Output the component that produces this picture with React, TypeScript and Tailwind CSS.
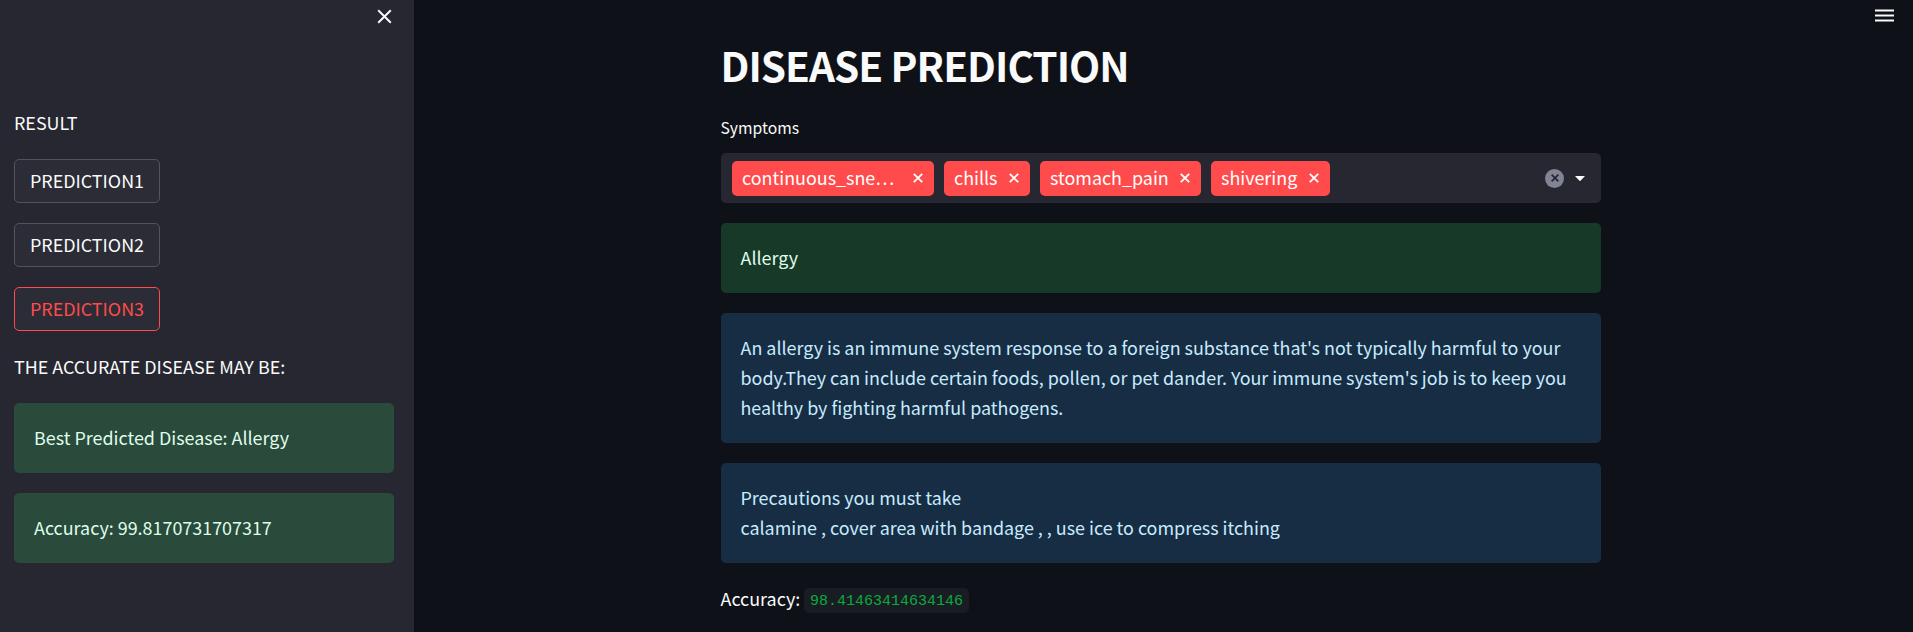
import type { ReactNode } from 'react';

function Cross({ className }: { className: string }) {
  return (
    <svg viewBox="0 0 10 10" className={className} fill="none" stroke="currentColor">
      <path d="M0.8 0.8 9.2 9.2M9.2 0.8 0.8 9.2" />
    </svg>
  );
}

function SidebarButton({ label, active = false }: { label: string; active?: boolean }) {
  return (
    <button
      className={
        active
          ? 'flex h-11 w-[146px] items-center justify-center rounded-[5px] border border-[#ff4b4b] bg-[#2b2c36] pb-0.5 text-[#ff4b4b]'
          : 'flex h-11 w-[146px] items-center justify-center rounded-[5px] border border-[#52535b] bg-[#2b2c36] pb-0.5'
      }
    >
      {label}
    </button>
  );
}

function Tag({ label, size }: { label: string; size: string }) {
  return (
    <span className={`flex h-[35px] items-center justify-between rounded-[5px] bg-[#ff4b4b] pr-[11px] pl-2.5 text-white ${size}`}>
      <span className="pb-0.5 leading-[26px]">{label}</span>
      <Cross className="size-2.5 stroke-[1.9]" />
    </span>
  );
}

function Alert({ tone, children }: { tone: string; children: ReactNode }) {
  return (
    <div className={`rounded-[5px] pt-[19px] pr-5 pb-[21px] leading-[30px] whitespace-nowrap ${tone}`}>
      {children}
    </div>
  );
}

export default function App() {
  return (
    <div className="flex h-[632px] w-full overflow-hidden bg-[#0e1117] font-['Noto_Sans_CJK_SC',sans-serif] text-[17.92px] text-[#fafafa]">
      <aside className="flex w-[414px] shrink-0 flex-col bg-[#262730] pr-5 pl-3.5">
        <div className="flex h-[106px] justify-end pt-[9px] pr-[2px]">
          <Cross className="size-[15px] stroke-[1.3]" />
        </div>
        <div className="flex flex-col gap-5">
          <p className="h-[33px] leading-8">RESULT</p>
          <SidebarButton label="PREDICTION1" />
          <SidebarButton label="PREDICTION2" />
          <SidebarButton label="PREDICTION3" active />
          <p className="h-8 leading-[30px]">THE ACCURATE DISEASE MAY BE:</p>
          <Alert tone="bg-[#2a4a3b] pl-5 text-[#dffde9]">Best Predicted Disease: Allergy</Alert>
          <Alert tone="bg-[#2a4a3b] pl-5 text-[#dffde9]">Accuracy: 99.8170731707317</Alert>
        </div>
      </aside>

      <main className="flex flex-1 pl-[307px]">
        <div className="flex w-[880px] flex-col pt-9">
          <h1 className="-ml-[0.5px] h-[76px] text-[40.5px] leading-[58px] font-bold tracking-[-0.98px] whitespace-nowrap">
            DISEASE PREDICTION
          </h1>
          <p className="-ml-[0.5px] h-[41px] text-[15.7px] leading-8">Symptoms</p>
          <div className="flex h-[50px] items-center justify-between rounded-[5px] bg-[#262730] pr-4 pl-[11px]">
            <div className="flex gap-2.5">
              <Tag label="continuous_sne…" size="w-[202px]" />
              <Tag label="chills" size="w-[86px]" />
              <Tag label="stomach_pain" size="w-[161px]" />
              <Tag label="shivering" size="w-[119px]" />
            </div>
            <div className="flex items-center gap-[11px]">
              <span className="flex size-[19px] items-center justify-center rounded-full bg-[#808495] text-[#262730]">
                <Cross className="size-2 stroke-[2.2]" />
              </span>
              <svg viewBox="0 0 10 5" className="h-[5px] w-2.5" fill="currentColor">
                <path d="M0.6 0h8.8q.6 0 .2.5L5.5 4.7q-.5.5-1 0L.4.5Q0 0 .6 0z" />
              </svg>
            </div>
          </div>
          <div className="mt-5 flex flex-col gap-5">
            <Alert tone="bg-[#173928] pl-[19.5px] text-[#dffde9]">Allergy</Alert>
            <Alert tone="bg-[#172d43] pl-[19.5px] text-[#c7ebff]">
              An allergy is an immune system response to a foreign substance that's not typically harmful to your
              <br />
              body.They can include certain foods, pollen, or pet dander. Your immune system's job is to keep you
              <br />
              healthy by fighting harmful pathogens.
            </Alert>
            <Alert tone="bg-[#172d43] pl-[19.5px] text-[#c7ebff]">
              Precautions you must take
              <br />
              calamine , cover area with bandage , , use ice to compress itching
            </Alert>
            <div className="flex h-8 items-center pt-0.5">
              <span className="-ml-[0.5px] w-[83.5px] pb-[3px] leading-[29px]">Accuracy:</span>
              <code className="flex h-[25px] w-[165px] items-center justify-center rounded-[5px] bg-[#1a1c24] pt-[3px] font-['Liberation_Mono',monospace] text-[15px] leading-[22px] text-[#09ab3b]">
                98.41463414634146
              </code>
            </div>
          </div>
        </div>
        <div className="flex flex-1 items-start justify-end pt-[9px] pr-[19px]">
          <svg viewBox="0 0 19 13" className="h-[13px] w-[19px]" fill="currentColor">
            <path d="M0 .5h19v2H0zM0 5.5h19v2H0zM0 10.5h19v2H0z" />
          </svg>
        </div>
      </main>
    </div>
  );
}
